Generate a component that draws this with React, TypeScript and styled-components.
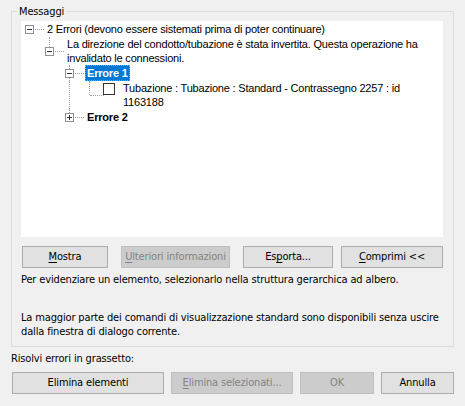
import React from "react";
import styled, { createGlobalStyle } from "styled-components";

const Global = createGlobalStyle`
  html, body { margin: 0; padding: 0; background: #f0f0f0; }
  body {
    font-family: "DejaVu Sans Condensed", "DejaVu Sans", sans-serif;
    font-size: 11px;
    letter-spacing: -0.15px;
    color: #000;
  }
`;

const Dialog = styled.div`
  width: 465px;
  height: 406px;
  box-sizing: border-box;
  padding: 11px 11px 0 11px;
  display: flex;
  flex-direction: column;
  overflow: hidden;
`;

const GroupBox = styled.section`
  position: relative;
  border: 1px solid #dcdcdc;
  padding: 9px 10px 7px 9px;
  display: flex;
  flex-direction: column;
`;

const Legend = styled.span`
  position: absolute;
  top: -7px;
  left: 5px;
  padding: 0 2px;
  line-height: 14px;
  background: #f0f0f0;
`;

const TreePanel = styled.div`
  height: 216px;
  background: #fff;
  font-family: "Liberation Sans", Arial, sans-serif;
  font-size: 11px;
  letter-spacing: -0.2px;
  line-height: 14px;
  overflow: hidden;
`;

const TreeRow = styled.div`
  display: flex;
  align-items: stretch;
  min-height: 16px;
`;

const Cell = styled.div<{ $up?: boolean; $down?: boolean; $pass?: boolean; $self?: boolean }>`
  position: relative;
  flex: 0 0 20px;
  display: flex;
  align-items: center;
  &::before {
    content: "";
    display: ${p => (p.$pass || p.$up || p.$down ? "block" : "none")};
    position: absolute;
    left: 8px;
    top: ${p => (p.$pass || p.$up ? "0" : "50%")};
    bottom: ${p => (p.$pass || p.$down ? "0" : "50%")};
    border-left: 1px dotted #a0a0a0;
  }
  &::after {
    content: "";
    display: ${p => (p.$self ? "block" : "none")};
    position: absolute;
    left: 9px;
    width: 14px;
    top: 50%;
    border-top: 1px dotted #a0a0a0;
  }
`;

const ExpanderSvg = styled.svg`
  position: relative;
  z-index: 1;
  margin-left: 4px;
  display: block;
`;

function Expander({ open }: { open: boolean }) {
  return (
    <ExpanderSvg width="9" height="9" viewBox="0 0 9 9">
      <rect x="0.5" y="0.5" width="8" height="8" fill="#fff" stroke="#919191" />
      <line x1="2" y1="4.5" x2="7" y2="4.5" stroke="#333" />
      {!open && <line x1="4.5" y1="2" x2="4.5" y2="7" stroke="#333" />}
    </ExpanderSvg>
  );
}

const Label = styled.span<{ $bold?: boolean; $selected?: boolean }>`
  align-self: center;
  margin-left: 4px;
  padding: ${p => (p.$selected ? "1px 2px" : "0 2px")};
  font-weight: ${p => (p.$bold ? 700 : 400)};
  white-space: nowrap;
  background: ${p => (p.$selected ? "#0078d7" : "transparent")};
  color: ${p => (p.$selected ? "#fff" : "#000")};
  outline: ${p => (p.$selected ? "1px dotted #ff8728" : "none")};
  outline-offset: -1px;
`;

const CheckBox = styled.span`
  align-self: flex-start;
  flex: 0 0 auto;
  width: 10px;
  height: 10px;
  margin: 2px 2px 0 2px;
  border: 1px solid #333;
  background: #fff;
`;

const ButtonRow = styled.div<{ $gap?: number }>`
  display: flex;
  margin-top: 9px;
`;

const Button = styled.button<{ $w: number; $ml: number }>`
  width: ${p => p.$w}px;
  height: 22px;
  margin-left: ${p => p.$ml}px;
  padding: 0;
  box-sizing: border-box;
  border: 1px solid #adadad;
  background: #e1e1e1;
  color: #000;
  font-family: inherit;
  font-size: 11px;
  letter-spacing: inherit;
  line-height: 20px;
  text-align: center;
  &:disabled {
    border-color: #bfbfbf;
    background: #cccccc;
    color: #838383;
  }
  u { text-decoration-thickness: 1px; text-underline-offset: 2px; }
`;

const Hint = styled.p<{ $mt: number }>`
  margin: ${p => p.$mt}px 0 0 0;
  line-height: 14px;
  white-space: nowrap;
`;

const FooterLabel = styled.p`
  margin: 5px 0 0 0;
  line-height: 14px;
`;

const FooterRow = styled.div`
  display: flex;
  margin-top: 6px;
`;

export default function App() {
  return (
    <Dialog>
      <Global />
      <GroupBox>
        <Legend>Messaggi</Legend>
        <TreePanel>
          <TreeRow>
            <Cell $self>
              <Expander open />
            </Cell>
            <Label>2 Errori (devono essere sistemati prima di poter continuare)</Label>
          </TreeRow>
          <TreeRow>
            <Cell />
            <Cell $self $up>
              <Expander open />
            </Cell>
            <Label>
              La direzione del condotto/tubazione è stata invertita. Questa operazione ha
              <br />
              invalidato le connessioni.
            </Label>
          </TreeRow>
          <TreeRow>
            <Cell />
            <Cell />
            <Cell $self $up $down>
              <Expander open />
            </Cell>
            <Label $bold $selected>Errore 1</Label>
          </TreeRow>
          <TreeRow>
            <Cell />
            <Cell />
            <Cell $pass />
            <Cell $self $up />
            <CheckBox />
            <Label>
              Tubazione : Tubazione : Standard - Contrassegno 2257 : id
              <br />
              1163188
            </Label>
          </TreeRow>
          <TreeRow>
            <Cell />
            <Cell />
            <Cell $self $up>
              <Expander open={false} />
            </Cell>
            <Label $bold>Errore 2</Label>
          </TreeRow>
        </TreePanel>
        <ButtonRow>
          <Button $w={86} $ml={1}><u>M</u>ostra</Button>
          <Button $w={109} $ml={13} disabled><u>U</u>lteriori informazioni</Button>
          <Button $w={90} $ml={13}>Es<u>p</u>orta...</Button>
          <Button $w={102} $ml={8}><u>C</u>omprimi &lt;&lt;</Button>
        </ButtonRow>
        <Hint $mt={5}>Per evidenziare un elemento, selezionarlo nella struttura gerarchica ad albero.</Hint>
        <Hint $mt={24}>
          La maggior parte dei comandi di visualizzazione standard sono disponibili senza uscire
          <br />
          dalla finestra di dialogo corrente.
        </Hint>
      </GroupBox>
      <FooterLabel>Risolvi errori in grassetto:</FooterLabel>
      <FooterRow>
        <Button $w={152} $ml={1}>Elimina elementi</Button>
        <Button $w={122} $ml={7} disabled><u>E</u>limina selezionati...</Button>
        <Button $w={74} $ml={7} disabled>OK</Button>
        <Button $w={73} $ml={7}>Annulla</Button>
      </FooterRow>
    </Dialog>
  );
}
